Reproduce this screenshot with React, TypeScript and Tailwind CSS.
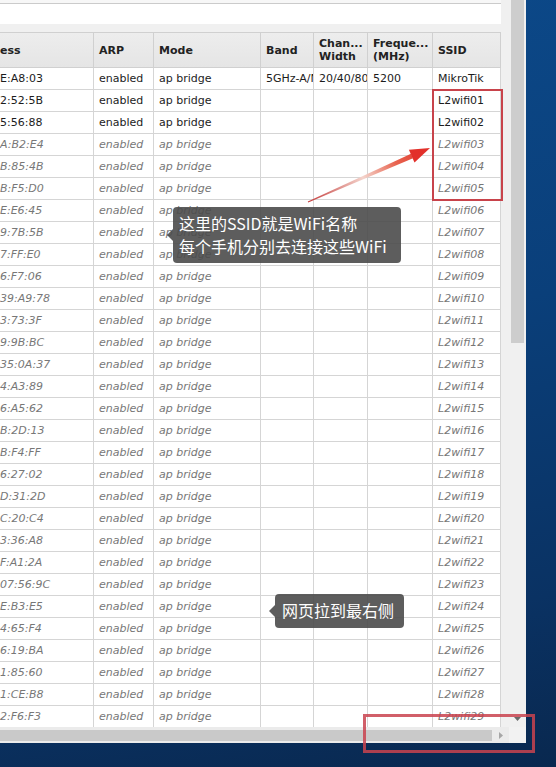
import React from "react";

type WlanRow = {
  mac: string;
  band?: string;
  width?: string;
  freq?: string;
  ssid: string;
  running: boolean;
};

// tail of each MAC address, the table is scrolled to the right
const macTails = [
  "E:A8:03", "2:52:5B", "5:56:88", "A:B2:E4", "B:85:4B", "B:F5:D0",
  "E:E6:45", "9:7B:5B", "7:FF:E0", "6:F7:06", "39:A9:78", "3:73:3F",
  "9:9B:BC", "35:0A:37", "4:A3:89", "6:A5:62", "B:2D:13", "B:F4:FF",
  "6:27:02", "D:31:2D", "C:20:C4", "3:36:A8", "F:A1:2A", "07:56:9C",
  "E:B3:E5", "4:65:F4", "6:19:BA", "1:85:60", "1:CE:B8", "2:F6:F3",
];

const rows: WlanRow[] = macTails.map((mac, i) =>
  i === 0
    ? { mac, band: "5GHz-A/N/AC", width: "20/40/80MHz", freq: "5200", ssid: "MikroTik", running: true }
    : { mac, ssid: `L2wifi${String(i).padStart(2, "0")}`, running: i < 3 }
);

const cols = "grid grid-cols-[94px_60px_107px_53px_54px_65px_68px]";

const HeaderCell = ({ children, first }: { children: React.ReactNode; first?: boolean }) => (
  <div
    className={`flex h-[36px] items-center overflow-hidden whitespace-nowrap border-y border-r border-[#d0d0d0] bg-[linear-gradient(#ededed,#e5e5e5)] text-[11px] font-bold leading-[13px] text-[#222] ${
      first ? "pl-0" : "px-[5px]"
    }`}
  >
    <div>{children}</div>
  </div>
);

const Cell = ({ children, running, first }: { children?: React.ReactNode; running: boolean; first?: boolean }) => (
  <div
    className={`h-[22px] overflow-hidden whitespace-nowrap border-b border-r border-[#d5d5d5] pt-[1px] text-[11px] leading-[20px] ${
      first ? "pl-0" : "px-[5px]"
    } ${running ? "text-[#1c1c1c]" : "italic text-[#777]"}`}
  >
    {children}
  </div>
);

const Tip = ({ children, className }: { children: React.ReactNode; className: string }) => (
  <div
    className={`absolute rounded-[4px] bg-[#4b4b4b]/90 font-['Noto_Sans_CJK_SC',sans-serif] text-[16px] leading-[23px] text-white ${className}`}
  >
    <span className="absolute left-[-6px] top-1/2 -mt-[6px] h-0 w-0 border-y-[6px] border-r-[6px] border-y-transparent border-r-[#4b4b4b]/90" />
    {children}
  </div>
);

export default function App() {
  return (
    <div className="relative h-[767px] w-[556px] overflow-hidden bg-[linear-gradient(170deg,#0c4a8b_0%,#0a3f7a_45%,#0a3263_80%,#09284f_100%)] font-['DejaVu_Sans',sans-serif]">
      <div className="flex h-[743px] w-[526px] flex-col bg-[#f0f0f0]">
        <div className="flex min-h-0 flex-1">
          {/* page */}
          <div className="w-[509px] overflow-hidden">
            <div className="h-[3px] w-[501px] bg-[#f7f7f7]" />
            <div className="h-[21px] w-[501px] border-t border-[#cbcbcb] bg-white" />
            <div className="h-[8px]" />
            <div className="w-[501px] bg-white">
              <div className={cols}>
                <HeaderCell first>ess</HeaderCell>
                <HeaderCell>ARP</HeaderCell>
                <HeaderCell>Mode</HeaderCell>
                <HeaderCell>Band</HeaderCell>
                <HeaderCell>
                  Chan...
                  <br />
                  Width
                </HeaderCell>
                <HeaderCell>
                  Freque...
                  <br />
                  (MHz)
                </HeaderCell>
                <HeaderCell>SSID</HeaderCell>
              </div>
              {rows.map((r) => (
                <div key={r.ssid} className={cols}>
                  <Cell first running={r.running}>{r.mac}</Cell>
                  <Cell running={r.running}>enabled</Cell>
                  <Cell running={r.running}>ap bridge</Cell>
                  <Cell running={r.running}>{r.band}</Cell>
                  <Cell running={r.running}>{r.width}</Cell>
                  <Cell running={r.running}>{r.freq}</Cell>
                  <Cell running={r.running}>{r.ssid}</Cell>
                </div>
              ))}
            </div>
          </div>
          {/* vertical scrollbar */}
          <div className="flex w-[17px] flex-col bg-[#f0f0f0]">
            <div className="ml-[2px] h-[343px] w-[13px] bg-[#cdcdcd]" />
            <div className="flex-1" />
            <div className="flex h-[17px] items-center justify-center">
              <svg width="7" height="4" viewBox="0 0 7 4">
                <path d="M0 0h7L3.5 4z" fill="#6a6a6a" />
              </svg>
            </div>
          </div>
        </div>
        {/* horizontal scrollbar */}
        <div className="flex h-[16px]">
          <div className="flex w-[509px] items-center bg-[#ebebeb]">
            <div className="h-[11px] w-[492px] bg-[#c9c9c9]" />
            <div className="flex flex-1 justify-center">
              <svg width="4" height="7" viewBox="0 0 4 7">
                <path d="M0 0l4 3.5L0 7z" fill="#a6a6a6" />
              </svg>
            </div>
          </div>
          <div className="w-[17px] bg-[#f2f2f2]" />
        </div>
      </div>

      {/* annotations */}
      <div className="pointer-events-none absolute left-[432px] top-[89px] h-[112px] w-[71px] border-[2.5px] border-[#c8434b]" />
      <div className="pointer-events-none absolute left-[363px] top-[714px] h-[39px] w-[172px] border-[3px] border-[#c9434f]/85" />

      <svg className="pointer-events-none absolute inset-0" width="556" height="767">
        <defs>
          <linearGradient id="arrowFill" gradientUnits="userSpaceOnUse" x1="308" y1="202" x2="430" y2="148">
            <stop offset="0" stopColor="#c43a3a" />
            <stop offset="0.45" stopColor="#f4d4cc" />
            <stop offset="0.72" stopColor="#e8644f" />
            <stop offset="1" stopColor="#e0302a" />
          </linearGradient>
        </defs>
        <polygon points="307.8,201.5 308.2,202.5 413,158.3 411,153.7" fill="url(#arrowFill)" />
        <polygon points="430,148 414.5,162.5 408.9,149.7" fill="#e2302a" />
      </svg>

      <Tip className="left-[173px] top-[207px] h-[56px] w-[228px] px-[6px] py-[5px]">
        <div>这里的SSID就是WiFi名称</div>
        <div>每个手机分别去连接这些WiFi</div>
      </Tip>
      <Tip className="left-[275px] top-[594px] h-[34px] w-[129px] px-[7px] py-[5px]">
        <div>网页拉到最右侧</div>
      </Tip>
    </div>
  );
}
